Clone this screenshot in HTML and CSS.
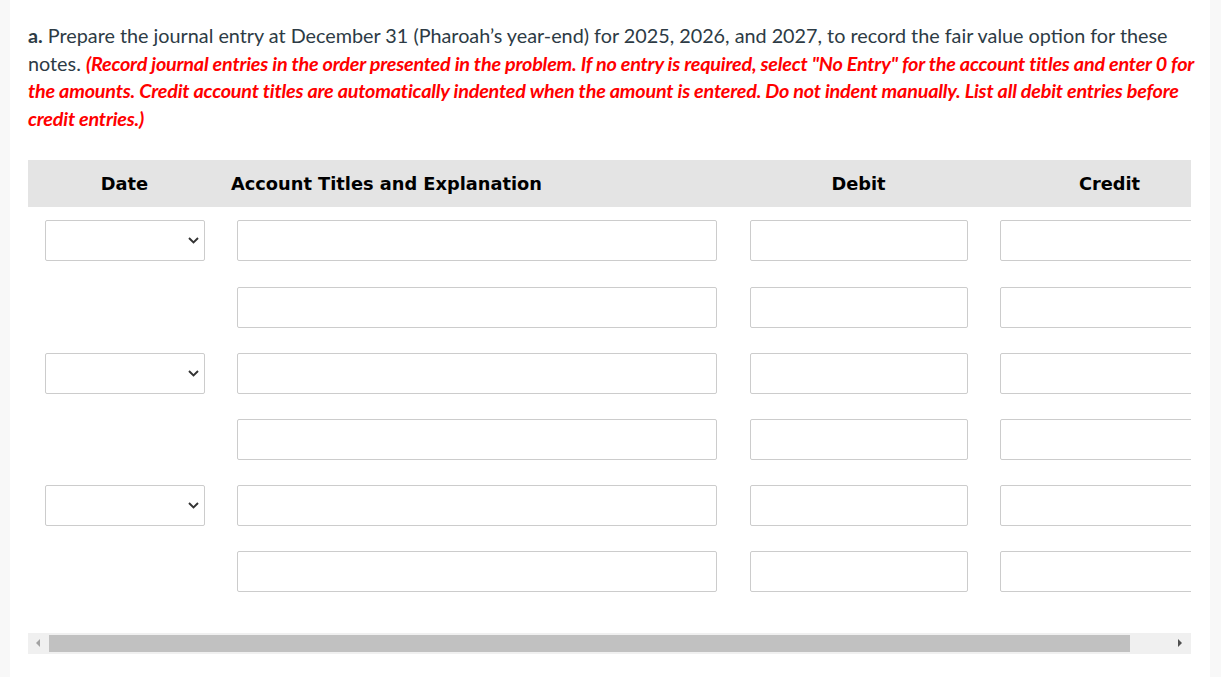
FILE: index.html
```html
<!DOCTYPE html>
<html>
<head>
<meta charset="utf-8">
<link rel="stylesheet" href="styles.css">
</head>
<body>
<div class="page">
  <main class="content">
    <p class="prompt"><b>a.</b> Prepare the journal entry at December 31 (Pharoah’s year-end) for 2025, 2026, and 2027, to record the fair value option for these notes. <em class="note">(Record journal entries in the order presented in the problem. If no entry is required, select "No Entry" for the account titles and enter 0 for the amounts. Credit account titles are automatically indented when the amount is entered. Do not indent manually. List all debit entries before credit entries.)</em></p>

    <div class="scroller">
      <div class="table">
        <div class="head">
          <div class="h h-date">Date</div>
          <div class="h h-acct">Account Titles and Explanation</div>
          <div class="h h-num">Debit</div>
          <div class="h h-num">Credit</div>
        </div>

        <div class="row">
          <div class="cell c-date"><div class="select"><svg class="chev" width="11" height="7" viewBox="0 0 11 7"><path d="M1 1 L5.5 5.5 L10 1" fill="none" stroke="#333" stroke-width="1.9"/></svg></div></div>
          <div class="cell c-acct"><div class="input acct"></div></div>
          <div class="cell c-num"><div class="input num"></div></div>
          <div class="cell c-num"><div class="input num"></div></div>
        </div>
        <div class="row">
          <div class="cell c-date"></div>
          <div class="cell c-acct"><div class="input acct"></div></div>
          <div class="cell c-num"><div class="input num"></div></div>
          <div class="cell c-num"><div class="input num"></div></div>
        </div>
        <div class="row">
          <div class="cell c-date"><div class="select"><svg class="chev" width="11" height="7" viewBox="0 0 11 7"><path d="M1 1 L5.5 5.5 L10 1" fill="none" stroke="#333" stroke-width="1.9"/></svg></div></div>
          <div class="cell c-acct"><div class="input acct"></div></div>
          <div class="cell c-num"><div class="input num"></div></div>
          <div class="cell c-num"><div class="input num"></div></div>
        </div>
        <div class="row">
          <div class="cell c-date"></div>
          <div class="cell c-acct"><div class="input acct"></div></div>
          <div class="cell c-num"><div class="input num"></div></div>
          <div class="cell c-num"><div class="input num"></div></div>
        </div>
        <div class="row">
          <div class="cell c-date"><div class="select"><svg class="chev" width="11" height="7" viewBox="0 0 11 7"><path d="M1 1 L5.5 5.5 L10 1" fill="none" stroke="#333" stroke-width="1.9"/></svg></div></div>
          <div class="cell c-acct"><div class="input acct"></div></div>
          <div class="cell c-num"><div class="input num"></div></div>
          <div class="cell c-num"><div class="input num"></div></div>
        </div>
        <div class="row">
          <div class="cell c-date"></div>
          <div class="cell c-acct"><div class="input acct"></div></div>
          <div class="cell c-num"><div class="input num"></div></div>
          <div class="cell c-num"><div class="input num"></div></div>
        </div>
      </div>
    </div>

    <div class="hscroll">
      <div class="arrow left"></div>
      <div class="track"><div class="thumb"></div></div>
      <div class="arrow right"></div>
    </div>
  </main>
</div>
</body>
</html>
```

FILE: styles.css
```css
* { box-sizing: border-box; }
html, body { margin: 0; padding: 0; }
body {
  background: #f8f8f8;
  font-family: Lato, "Open Sans", sans-serif;
  width: 1221px;
  height: 677px;
  overflow: hidden;
}
.page {
  display: flex;
  padding: 0 11px 0 10px;
  height: 677px;
}
.content {
  background: #fff;
  flex: 1;
  padding: 22px 6px 0 18px;
}
.prompt {
  margin: 0;
  font-size: 19.8px;
  line-height: 27.6px;
  color: #2d3b45;
}
.prompt b { font-weight: 700; }
.note {
  color: #ff0000;
  font-weight: 700;
  font-style: italic;
  letter-spacing: -0.2px;
}
.scroller {
  margin-top: 28px;
  overflow: hidden;
  width: 1163px;
}
.table { width: 1250px; }
.head {
  display: flex;
  height: 47px;
  align-items: center;
  background: #e4e4e4;
  width: 1163px;
  overflow: hidden;
  font-family: Tahoma, "DejaVu Sans", Verdana, sans-serif;
  font-weight: 700;
  font-size: 17.8px;
  color: #000;
}
.h { flex-shrink: 0; }
.h-date { width: 193px; text-align: center; }
.h-acct { width: 512px; padding-left: 10px; }
.h-num { width: 251px; text-align: center; }
.row {
  display: flex;
  height: 66.2px;
  padding-top: 13px;
}
.cell { padding: 0 16px; flex-shrink: 0; }
.c-date { width: 193px; padding-left: 17px; }
.c-acct { width: 512px; }
.c-num { width: 251px; padding-left: 17px; }
.c-num + .c-num { padding-left: 16px; }
.input, .select {
  height: 41px;
  border: 1px solid #cccccc;
  border-radius: 2px;
  background: #fff;
}
.select {
  width: 160px;
  display: flex;
  align-items: center;
  justify-content: flex-end;
  padding-right: 5px;
}
.chev { display: block; }
.acct { width: 480px; }
.num { width: 218px; }
.hscroll {
  margin-top: 28px;
  display: flex;
  align-items: center;
  width: 1163px;
  height: 21px;
  background: #f0f0f0;
}
.arrow { width: 21px; height: 21px; position: relative; }
.arrow.left::after {
  content: "";
  position: absolute;
  left: 8px; top: 6px;
  border-right: 4px solid #a3a3a3;
  border-top: 4px solid transparent;
  border-bottom: 4px solid transparent;
}
.arrow.right { width: 61px; }
.arrow.right::after {
  content: "";
  position: absolute;
  right: 9px; top: 6px;
  border-left: 4px solid #505050;
  border-top: 4px solid transparent;
  border-bottom: 4px solid transparent;
}
.track { flex: 1; height: 21px; display: flex; align-items: center; }
.thumb { width: 1081px; height: 17px; background: #c1c1c1; }
```
